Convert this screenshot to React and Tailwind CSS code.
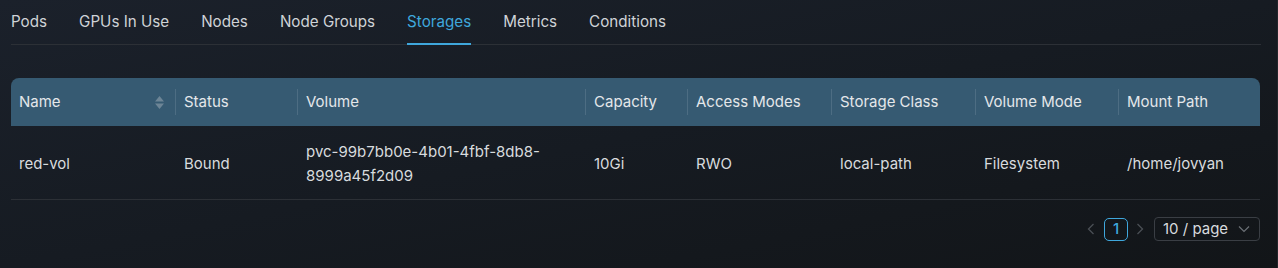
import React from "react";

const tabs = ["Pods", "GPUs In Use", "Nodes", "Node Groups", "Storages", "Metrics", "Conditions"];

const columns = [
  { key: "name", title: "Name", width: "w-[164px]", sort: true },
  { key: "status", title: "Status", width: "w-[122px]" },
  { key: "volume", title: "Volume", width: "w-[288px]" },
  { key: "capacity", title: "Capacity", width: "w-[102px]" },
  { key: "access", title: "Access Modes", width: "w-[144px]" },
  { key: "storageClass", title: "Storage Class", width: "w-[144px]" },
  { key: "volumeMode", title: "Volume Mode", width: "w-[143px]" },
  { key: "mount", title: "Mount Path", width: "flex-1" },
];

const rows = [
  {
    name: "red-vol",
    status: "Bound",
    volume: "pvc-99b7bb0e-4b01-4fbf-8db8-8999a45f2d09",
    capacity: "10Gi",
    access: "RWO",
    storageClass: "local-path",
    volumeMode: "Filesystem",
    mount: "/home/jovyan",
  },
];

const SortIcon = () => (
  <svg width="11" height="15" viewBox="0 0 11 15" className="text-[#6d8596]">
    <path d="M5.5 1 L10 6.5 H1 Z" fill="currentColor" />
    <path d="M5.5 14 L10 8.5 H1 Z" fill="currentColor" />
  </svg>
);

const App = () => {
  return (
    <div
      className="w-[1278px] h-[268px] overflow-hidden bg-gradient-to-br from-[#1b212b] via-[#161b22] to-[#121518] text-[#d6d9dc] border-r border-[#22262b]"
      style={{ fontFamily: "Inter, 'Noto Sans', sans-serif" }}
    >
      <div className="pl-[11px] pr-[16px]">
        {/* TABS */}
        <div className="flex h-[45px] border-b border-[#2c3036]">
          {tabs.map((t, i) => (
            <div
              key={t}
              className={`relative flex items-center h-full text-[15.2px] ${i === 0 ? "" : "ml-[32px]"} ${
                t === "Storages" ? "text-[#3fa7dc]" : "text-[#cfd3d7]"
              }`}
            >
              <span className="mt-[1px]">{t}</span>
              {t === "Storages" && (
                <span className="absolute left-0 right-0 bottom-[-1px] h-[2px] bg-[#3fa7dc]" />
              )}
            </div>
          ))}
        </div>

        {/* TABLE */}
        <div className="mt-[33px] w-[1249px]">
          <div className="flex h-[48px] items-center bg-[#365a72] rounded-t-[8px] text-[15px] text-[#e4e7ea]">
            {columns.map((c, i) => (
              <div
                key={c.key}
                className={`${c.width} relative flex items-center h-full pt-[1px] ${i === 0 ? "pl-[8px] pr-[10px]" : "pl-[9px]"}`}
              >
                {i > 0 && <span className="absolute left-0 top-[11px] h-[26px] w-px bg-[#4d6d83]" />}
                <span className="flex-1">{c.title}</span>
                {c.sort && <SortIcon />}
              </div>
            ))}
          </div>
          {rows.map((r) => (
            <div key={r.name} className="flex h-[74px] pt-[3px] items-center border-b border-[#2c3036] text-[15px] text-[#d8dbde]">
              {columns.map((c, i) => (
                <div
                  key={c.key}
                  className={`${c.width} leading-[24px] ${i === 0 ? "pl-[8px]" : "pl-[9px]"} ${
                    c.key === "volume" ? "pr-[24px] break-words" : ""
                  }`}
                >
                  {r[c.key]}
                </div>
              ))}
            </div>
          ))}

          {/* PAGINATION */}
          <div className="flex justify-end items-center mt-[17px] text-[15px]">
            <span className="text-[#4a4f55]">
              <svg width="8" height="12" viewBox="0 0 8 12">
                <path d="M6.5 1 L1.5 6 L6.5 11" stroke="currentColor" strokeWidth="1.3" fill="none" />
              </svg>
            </span>
            <span className="ml-[9px] flex items-center justify-center w-[24px] h-[23px] rounded-[5px] border border-[#3fa7dc] text-[#3fa7dc] font-medium">
              1
            </span>
            <span className="ml-[8px] text-[#4a4f55]">
              <svg width="8" height="12" viewBox="0 0 8 12">
                <path d="M1.5 1 L6.5 6 L1.5 11" stroke="currentColor" strokeWidth="1.3" fill="none" />
              </svg>
            </span>
            <div className="ml-[10px] flex items-center w-[106px] h-[24px] rounded-[4px] border border-[#3a3e44] pl-[8px] pr-[9px] text-[#d8dbde]">
              <span className="flex-1">10 / page</span>
              <svg width="12" height="8" viewBox="0 0 12 8" className="text-[#6b7076]">
                <path d="M1 1.5 L6 6.5 L11 1.5" stroke="currentColor" strokeWidth="1.2" fill="none" />
              </svg>
            </div>
          </div>
        </div>
      </div>
    </div>
  );
};

export default App;
